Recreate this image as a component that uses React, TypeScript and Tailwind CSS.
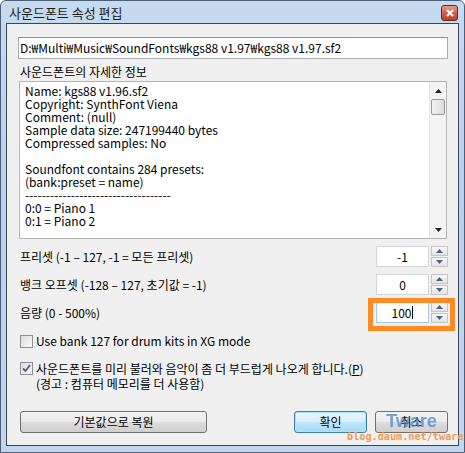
import React from "react";

const font = "font-['Noto_Sans_CJK_KR','Noto_Sans',sans-serif]";

const detailLines = [
  "Name: kgs88 v1.96.sf2",
  "Copyright: SynthFont Viena",
  "Comment: (null)",
  "Sample data size: 247199440 bytes",
  "Compressed samples: No",
  "\u00a0",
  "Soundfont contains 284 presets:",
  "(bank:preset = name)",
  "-----------------------------------",
  "0:0 = Piano 1",
  "0:1 = Piano 2",
];

const Arrow = ({ up }: { up?: boolean }) => (
  <svg width="7" height="4" viewBox="0 0 7 4">
    <path d={up ? "M3.5 0 L7 4 L0 4 Z" : "M0 0 L7 0 L3.5 4 Z"} fill="#4d6185" />
  </svg>
);

const SpinBox = ({ value, focused }: { value: string; focused?: boolean }) => (
  <div className="flex h-[21px] items-center">
    <div
      className={`flex h-[21px] w-[53px] items-center justify-center border bg-white text-[12px] text-black ${
        focused ? "border-[#a9c7e3]" : "border-[#d5d5d5]"
      }`}
    >
      {value}
      {focused && <span className="ml-px inline-block h-[13px] w-px bg-black" />}
    </div>
    <div className="ml-[2px] flex h-[21px] w-[17px] flex-col gap-px">
      <div className="flex flex-1 items-center justify-center border border-[#c5c5c5] bg-[linear-gradient(#f7f7f7,#e3e3e3)]">
        <Arrow up />
      </div>
      <div className="flex flex-1 items-center justify-center border border-[#c5c5c5] bg-[linear-gradient(#f7f7f7,#e3e3e3)]">
        <Arrow />
      </div>
    </div>
  </div>
);

const Row = ({ label, children }: { label: React.ReactNode; children: React.ReactNode }) => (
  <div className="flex h-[21px] items-center justify-between">
    <span className="text-[12px] text-black">{label}</span>
    {children}
  </div>
);

const Checkbox = ({ checked }: { checked?: boolean }) => (
  <div className="flex h-[13px] w-[13px] shrink-0 items-center justify-center border border-[#8f8f8f] bg-[linear-gradient(135deg,#dcdcdc,#f7f7f7)]">
    {checked && (
      <svg width="9" height="9" viewBox="0 0 9 9">
        <path d="M1 4.5 L3.5 7 L8 1" stroke="#4a5f97" strokeWidth="1.8" fill="none" />
      </svg>
    )}
  </div>
);

const Button = ({ label, primary, w }: { label: string; primary?: boolean; w: string }) => (
  <div
    className={`flex h-[22px] items-center justify-center rounded-[3px] border text-[12px] text-black ${w} ${
      primary
        ? "border-[#3c7fb1] bg-[linear-gradient(#eaf6fd_0%,#d9f0fc_50%,#bee6fd_51%,#a7d9f5_100%)] shadow-[inset_0_0_0_1px_#aee1fb]"
        : "border-[#707070] bg-[linear-gradient(#f2f2f2_0%,#ebebeb_50%,#dddddd_51%,#cfcfcf_100%)]"
    }`}
  >
    {label}
  </div>
);

export default function App() {
  return (
    <div className={`${font} relative h-[453px] w-[465px] overflow-hidden`}>
      <div className="flex h-[453px] w-[465px] flex-col rounded-t-[6px] border border-[#4b5e76] bg-[linear-gradient(180deg,#c6dbef_0%,#b9d1ea_40%,#c2d7ec_100%)] px-[5px] pb-[6px]">
        <div className="flex h-[22px] items-center justify-between">
          <span className="pl-[3px] pt-[2px] text-[13px] text-[#1b1b1b]">사운드폰트 속성 편집</span>
          <div className="mr-px mt-[2px] flex h-[16px] w-[17px] items-center justify-center rounded-[3px] border border-[#5c2a20] bg-[linear-gradient(#e8a08c_0%,#d2604a_50%,#c0402a_100%)]">
            <svg width="8" height="8" viewBox="0 0 8 8">
              <path d="M1 1 L7 7 M7 1 L1 7" stroke="white" strokeWidth="2" />
            </svg>
          </div>
        </div>
        <div className="flex flex-1 flex-col border border-[#3a4656] bg-[#f0f0f0] pl-[11px] pr-[10px]">
          <div className="mt-[13px] flex h-[22px] items-center border border-[#abadb3] border-t-[#8e8f8f] bg-white pl-[1px] text-[12px] text-black">
            D:₩Multi₩Music₩SoundFonts₩kgs88 v1.97₩kgs88 v1.97.sf2
          </div>
          <div className="mt-[5px] h-[15px] pl-[2px] text-[12px] leading-[15px] text-black">
            사운드폰트의 자세한 정보
          </div>
          <div className="ml-px mt-[2px] flex h-[158px] w-[428px] border border-[#b5b5b5] bg-white">
            <div className="flex-1 overflow-hidden pl-[5px] pt-[2px]">
              {detailLines.map((l, i) => (
                <div key={i} className="h-[13px] whitespace-nowrap text-[12px] leading-[13px] text-black">
                  {l}
                </div>
              ))}
            </div>
            <div className="flex w-[17px] flex-col border-l border-[#e8e8e8] bg-[#f3f3f3]">
              <div className="flex h-[17px] items-center justify-center">
                <svg width="7" height="4" viewBox="0 0 7 4">
                  <path d="M3.5 0 L7 4 L0 4 Z" fill="#222" />
                </svg>
              </div>
              <div className="mx-[1px] h-[16px] rounded-[2px] border border-[#989898] bg-[linear-gradient(90deg,#f2f2f2,#dcdcdc)]" />
              <div className="flex-1" />
              <div className="flex h-[17px] items-center justify-center">
                <svg width="7" height="4" viewBox="0 0 7 4">
                  <path d="M0 0 L7 0 L3.5 4 Z" fill="#222" />
                </svg>
              </div>
            </div>
          </div>
          <div className="mt-[7px] flex flex-col gap-[7px] pl-[2px]">
            <Row label="프리셋 (-1 – 127, -1 = 모든 프리셋)">
              <SpinBox value="-1" />
            </Row>
            <Row label="뱅크 오프셋 (-128 – 127, 초기값 = -1)">
              <SpinBox value="0" />
            </Row>
            <Row label="음량 (0 - 500%)">
              <div className="relative">
                <SpinBox value="100" focused />
                <div className="absolute -bottom-[8px] -left-[8px] -right-[7px] -top-[4px] border-[5px] border-[#ff8a22]" />
              </div>
            </Row>
          </div>
          <div className="mt-[11px] flex items-center gap-[3px] pl-[2px]">
            <Checkbox />
            <span className="text-[12px] leading-[14px] text-black">Use bank 127 for drum kits in XG mode</span>
          </div>
          <div className="mt-[13px] flex items-start gap-[3px] pl-[2px]">
            <div className="mt-[1px]">
              <Checkbox checked />
            </div>
            <div className="text-[12px] leading-[15px] text-black">
              <div>
                사운드폰트를 미리 불러와 음악이 좀 더 부드럽게 나오게 합니다.(<span className="underline">P</span>)
              </div>
              <div>(경고 : 컴퓨터 메모리를 더 사용함)</div>
            </div>
          </div>
          <div className="mt-[20px] flex items-center pl-[2px]">
            <Button label="기본값으로 복원" w="w-[187px]" />
            <div className="flex-1" />
            <Button label="확인" primary w="w-[73px]" />
            <div className="ml-[8px]">
              <Button label="취소" w="w-[73px]" />
            </div>
          </div>
        </div>
      </div>
      <div className="pointer-events-none absolute left-[386px] top-[410px] font-['Liberation_Sans',sans-serif] text-[18px] font-bold leading-[22px] text-[#4f86cc]/75">
        Tware
      </div>
      <div className="pointer-events-none absolute left-[347px] top-[430px] font-['DejaVu_Sans_Mono',monospace] text-[10.2px] font-bold leading-[14px] text-[#f29c52]">
        blog.daum.net/tware
      </div>
    </div>
  );
}
